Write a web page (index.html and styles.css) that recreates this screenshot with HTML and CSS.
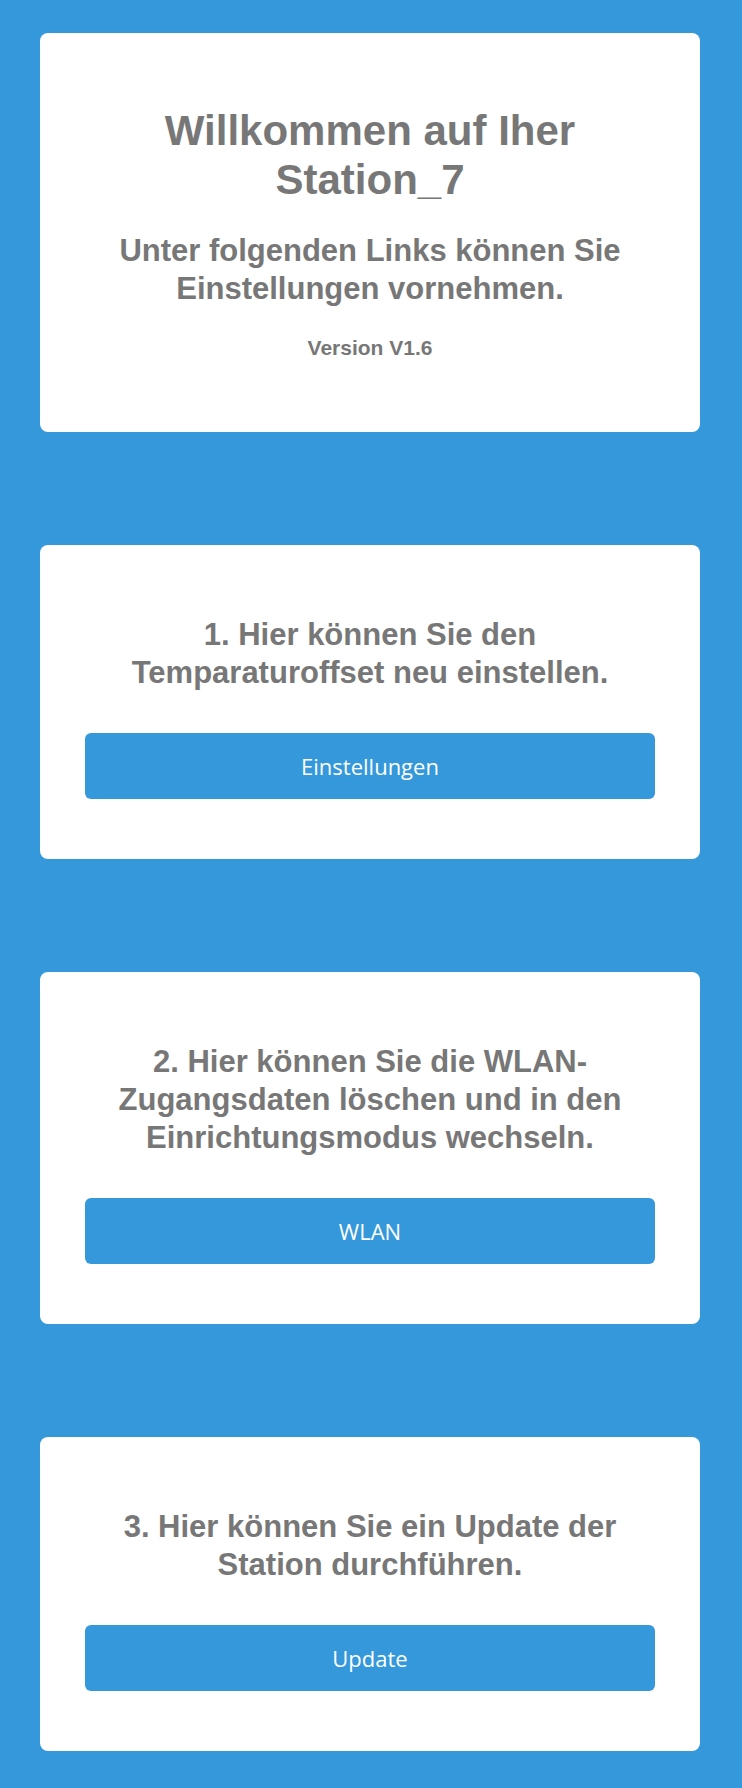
FILE: index.html
```html
<!DOCTYPE html>
<html lang="de">
<head>
<meta charset="utf-8">
<meta name="viewport" content="width=device-width, initial-scale=1">
<title>Station_7</title>
<link rel="stylesheet" href="styles.css">
</head>
<body>
<main class="page">
  <section class="card">
    <h1 class="title">Willkommen auf Iher Station_7</h1>
    <h2 class="heading">Unter folgenden Links können Sie Einstellungen vornehmen.</h2>
    <h4 class="version">Version V1.6</h4>
  </section>
  <section class="card">
    <h2 class="heading">1. Hier können Sie den Temparaturoffset neu einstellen.</h2>
    <button class="action" type="button">Einstellungen</button>
  </section>
  <section class="card">
    <h2 class="heading">2. Hier können Sie die WLAN-Zugangsdaten löschen und in den Einrichtungsmodus wechseln.</h2>
    <button class="action" type="button">WLAN</button>
  </section>
  <section class="card">
    <h2 class="heading">3. Hier können Sie ein Update der Station durchführen.</h2>
    <button class="action" type="button">Update</button>
  </section>
</main>
</body>
</html>
```

FILE: styles.css
```css
* {
  box-sizing: border-box;
}

body {
  margin: 0;
  background: #3498db;
  color: #777;
  font-family: "Liberation Sans", Arial, sans-serif;
}

.page {
  display: flex;
  flex-direction: column;
  gap: 113px;
  padding: 33px 42px 37px 40px;
}

.card {
  padding: 45px 45px 60px;
  border-radius: 8px;
  background: #fff;
  text-align: center;
}

.title {
  margin: 28px 0;
  font-size: 42px;
  line-height: 49px;
}

.heading {
  margin: 26px 0;
  font-size: 31px;
  line-height: 38px;
}

.version {
  margin: 28px 0 12px;
  font-size: 21px;
  line-height: 24px;
}

.action {
  display: block;
  width: 100%;
  height: 66px;
  margin-top: 41px;
  border: 0;
  border-radius: 6px;
  background: #3498db;
  color: #fff;
  font-family: Tahoma, "Open Sans", sans-serif;
  font-size: 22px;
  line-height: 30px;
}
```
